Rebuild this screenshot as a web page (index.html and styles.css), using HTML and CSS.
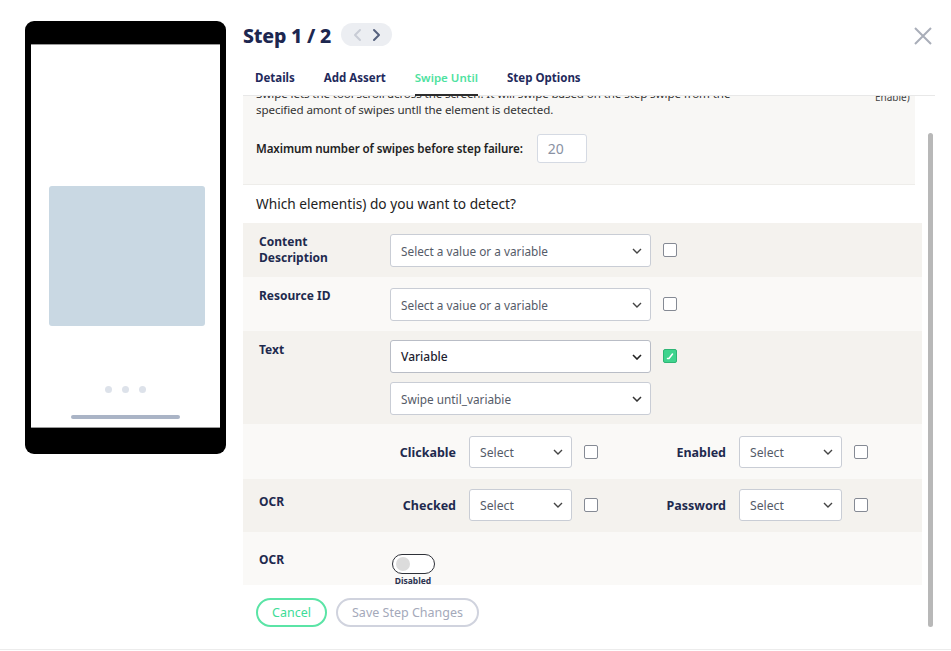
FILE: index.html
```html
<!DOCTYPE html>
<html>
<head>
<meta charset="utf-8">
<link rel="stylesheet" href="styles.css">
</head>
<body>
<div class="modal">
  <div class="phone">
    <div class="screen">
      <div class="shot"></div>
      <div class="dots"><span></span><span></span><span></span></div>
      <div class="homebar"></div>
    </div>
  </div>
  <div class="main">
    <div class="header">
      <div class="title-wrap">
        <h1 class="title">Step 1 / 2</h1>
        <div class="pager">
          <svg width="10" height="14" viewBox="0 0 10 14"><polyline points="7,2 2,7 7,12" fill="none" stroke="#c8ccd5" stroke-width="2" stroke-linecap="round" stroke-linejoin="round"/></svg>
          <svg width="10" height="14" viewBox="0 0 10 14"><polyline points="3,2 8,7 3,12" fill="none" stroke="#56617d" stroke-width="2" stroke-linecap="round" stroke-linejoin="round"/></svg>
        </div>
      </div>
      <svg class="close" width="20" height="20" viewBox="0 0 20 20"><path d="M2 2 L18 18 M18 2 L2 18" stroke="#a9aeb9" stroke-width="2" fill="none"/></svg>
    </div>
    <div class="tabs">
      <span class="tab">Details</span>
      <span class="tab">Add Assert</span>
      <span class="tab active">Swipe Until</span>
      <span class="tab">Step Options</span>
    </div>
    <div class="viewport">
      <div class="content">
        <div class="intro">
          <div class="intro-top">
            <div class="desc">
              <span class="line">Swipe lets the tool scroll across the screen. It will swipe based on the step swipe from the</span>
              <span class="line">specified amont of swipes untll the element is detected.</span>
            </div>
            <div class="side-note">Enable)</div>
          </div>
          <div class="max-row">
            <span class="max-label">Maximum number of swipes before step failure:</span>
            <div class="num-input">20</div>
          </div>
        </div>
        <div class="which">Which elementis) do you want to detect?</div>

        <div class="row dark">
          <div class="label">Content<br>Description</div>
          <div class="controls">
            <div class="select wide"><span>Select a value or a variable</span><svg width="10" height="6" viewBox="0 0 10 6"><polyline points="1,1 5,5 9,1" fill="none" stroke="#444" stroke-width="1.4"/></svg></div>
          </div>
          <div class="check"></div>
        </div>

        <div class="row light">
          <div class="label">Resource ID</div>
          <div class="controls">
            <div class="select wide"><span>Select a vaiue or a variable</span><svg width="10" height="6" viewBox="0 0 10 6"><polyline points="1,1 5,5 9,1" fill="none" stroke="#444" stroke-width="1.4"/></svg></div>
          </div>
          <div class="check"></div>
        </div>

        <div class="row dark text-row">
          <div class="label">Text</div>
          <div class="controls">
            <div class="select wide strong"><span>Variable</span><svg width="10" height="6" viewBox="0 0 10 6"><polyline points="1,1 5,5 9,1" fill="none" stroke="#222" stroke-width="1.6"/></svg></div>
            <div class="select wide"><span>Swipe until_variabie</span><svg width="10" height="6" viewBox="0 0 10 6"><polyline points="1,1 5,5 9,1" fill="none" stroke="#333" stroke-width="1.5"/></svg></div>
          </div>
          <div class="check on"><svg width="14" height="14" viewBox="0 0 14 14"><path d="M4.5 9.5 L6 9.5 L9.5 5" fill="none" stroke="#fff" stroke-width="1.5" stroke-linecap="round"/></svg></div>
        </div>

        <div class="row light pairs">
          <div class="label"></div>
          <div class="pair first">
            <span class="plabel">Clickable</span>
            <div class="select small"><span>Select</span><svg width="10" height="6" viewBox="0 0 10 6"><polyline points="1,1 5,5 9,1" fill="none" stroke="#444" stroke-width="1.4"/></svg></div>
            <div class="check"></div>
          </div>
          <div class="pair second">
            <span class="plabel">Enabled</span>
            <div class="select small"><span>Select</span><svg width="10" height="6" viewBox="0 0 10 6"><polyline points="1,1 5,5 9,1" fill="none" stroke="#444" stroke-width="1.4"/></svg></div>
            <div class="check"></div>
          </div>
        </div>

        <div class="row dark pairs">
          <div class="label ocr1">OCR</div>
          <div class="pair first">
            <span class="plabel">Checked</span>
            <div class="select small"><span>Select</span><svg width="10" height="6" viewBox="0 0 10 6"><polyline points="1,1 5,5 9,1" fill="none" stroke="#444" stroke-width="1.4"/></svg></div>
            <div class="check"></div>
          </div>
          <div class="pair second">
            <span class="plabel">Password</span>
            <div class="select small"><span>Select</span><svg width="10" height="6" viewBox="0 0 10 6"><polyline points="1,1 5,5 9,1" fill="none" stroke="#444" stroke-width="1.4"/></svg></div>
            <div class="check"></div>
          </div>
        </div>

        <div class="row light ocr-row">
          <div class="label">OCR</div>
          <div class="toggle-wrap">
            <div class="toggle"><span class="knob"></span></div>
            <span class="toggle-text">Disabled</span>
          </div>
        </div>

        <div class="buttons">
          <button class="btn cancel">Cancel</button>
          <button class="btn save">Save Step Changes</button>
        </div>
      </div>
      <div class="scrollbar"><div class="thumb"></div></div>
    </div>
  </div>
</div>
</body>
</html>
```

FILE: styles.css
```css
* { box-sizing: border-box; }
html, body { margin: 0; padding: 0; background: #fff; }
body { font-family: "Noto Sans", "Open Sans", sans-serif; color: #222; }

.modal {
  display: flex;
  height: 650px;
  padding: 21px 16px 0 25px;
  border-bottom: 1px solid #ececec;
  gap: 17px;
  align-items: flex-start;
}

/* phone */
.phone {
  width: 201px;
  height: 433px;
  background: #000;
  border-radius: 9px;
  padding: 23px 6px 26px 6px;
  flex: none;
}
.screen {
  background: #fff;
  height: 100%;
  display: flex;
  flex-direction: column;
  align-items: center;
  padding-top: 141px;
  border-top: 1px solid #9a9a9a;
  border-bottom: 1px solid #9a9a9a;
}
.shot {
  width: 156px;
  height: 140px;
  background: #c9d8e3;
  border-radius: 3px;
  margin-left: 2px;
}
.dots { display: flex; gap: 10px; margin-top: 60px; }
.dots span { width: 7px; height: 7px; border-radius: 50%; background: #dde2ea; }
.homebar { width: 109px; height: 4px; border-radius: 2px; background: #aab4c6; margin-top: 22px; }

/* main */
.main { width: 692px; flex: none; margin-top: -21px; }
.header {
  height: 50px;
  padding-top: 20px;
  display: flex;
  justify-content: space-between;
  align-items: center;
}
.title-wrap { display: flex; align-items: center; gap: 10px; height: 30px; }
.title {
  margin: 0;
  font-size: 19.5px;
  font-weight: 800;
  color: #1d2750;
  letter-spacing: -0.2px;
}
.pager {
  width: 51px;
  height: 23px;
  border-radius: 12px;
  background: #eceef2;
  display: flex;
  align-items: center;
  justify-content: center;
  gap: 8px;
  margin-top: -1px;
}
.close { margin-right: 2px; margin-top: 2px; }

.tabs {
  display: flex;
  gap: 29px;
  height: 46px;
  padding: 19px 0 0 12px;
  border-bottom: 1px solid #e8e8e8;
  position: relative;
  z-index: 2;
}
.tab {
  font-size: 11.5px;
  font-weight: 700;
  color: #1f2a5c;
  height: 27px;
  line-height: 18px;
  border-bottom: 2px solid transparent;
}
.tab.active { color: #4ee2a0; font-weight: 600; border-bottom-color: #2c2c2c; }

.viewport {
  display: flex;
  gap: 6px;
  height: 536px;
  overflow: hidden;
}
.content { width: 679px; flex: none; }
.scrollbar { width: 5px; flex: none; }
.thumb { margin-top: 37px; height: 494px; width: 5px; border-radius: 3px; background: #b8b8b8; }

.intro {
  background: #f8f7f5;
  margin-top: -10px;
  padding: 0 0 21px 13px;
  border-bottom: 1px solid #eeedea;
  width: 672px;
}
.intro-top { display: flex; justify-content: space-between; }
.desc { font-size: 11.6px; line-height: 16px; color: #333; letter-spacing: -0.1px; }
.line { display: block; white-space: nowrap; }
.side-note { font-size: 10px; line-height: 12px; color: #444; width: 40px; margin-top: 5px; text-align: left; }
.max-row { display: flex; align-items: center; margin-top: 16px; gap: 14px; }
.max-label { font-size: 11.6px; font-weight: 600; color: #222; letter-spacing: -0.1px; }
.num-input {
  width: 50px;
  height: 29px;
  border: 1px solid #d5dae3;
  border-radius: 3px;
  background: #fff;
  color: #8a92a3;
  font-size: 14px;
  line-height: 27px;
  padding-left: 10px;
}

.which {
  height: 38px;
  padding-left: 13px;
  font-size: 13.7px;
  line-height: 38px;
  color: #222;
  background: #fff;
}

.row { display: flex; align-items: flex-start; padding: 11px 0 10px 16px; }
.row.dark { background: #f4f2ee; }
.row.light { background: #faf9f7; }
.row.text-row { padding-top: 9px; padding-bottom: 9px; }
.text-row .label { margin-top: 2px; }
.label {
  width: 131px;
  flex: none;
  font-size: 12px;
  font-weight: 700;
  line-height: 16px;
  color: #1e2a4e;
}
.controls { display: flex; flex-direction: column; gap: 9px; }
.select {
  display: flex;
  align-items: center;
  justify-content: space-between;
  height: 33px;
  background: #fff;
  border: 1px solid #c9cdd5;
  border-radius: 3px;
  padding: 0 8px 0 10px;
  font-size: 11.8px;
  color: #555b68;
}
.select.wide { width: 261px; }
.select.strong { color: #1e2230; font-weight: 500; font-size: 12px; border-color: #b9bdc6; }
.select.small { width: 103px; height: 32px; padding-left: 10px; font-size: 12.2px; }
.check {
  width: 14px;
  height: 14px;
  border: 1.5px solid #858a94;
  border-radius: 2px;
  margin: 9px 0 0 12px;
  background: #fff;
  flex: none;
}
.check.on { background: #3fd48e; border-color: #2eb575; display: flex; align-items: center; justify-content: center; }
.check.on svg { flex: none; }

.row.pairs { padding-top: 12px; padding-bottom: 11px; height: 55px; }
.row.pairs.dark { padding-top: 10px; height: 53px; }
.pair { display: flex; align-items: center; }
.pair .check { margin-top: 0; }
.plabel { font-size: 12.5px; font-weight: 700; color: #1e2a4e; text-align: right; flex: none; margin-right: 13px; }
.pair.first .plabel { width: 66px; }
.pair.second .plabel { width: 128px; }
.label.ocr1 { margin-top: 5px; }

.ocr-row { padding-top: 20px; height: 53px; }
.toggle-wrap { display: flex; flex-direction: column; align-items: center; width: 44px; margin-top: 2px; margin-left: 1px; }
.toggle {
  width: 43px;
  height: 20px;
  border: 1.5px solid #2e3138;
  border-radius: 10px;
  background: #fff;
  padding: 2px 3px;
}
.knob { display: block; width: 14px; height: 14px; border-radius: 50%; background: #dcdcdc; }
.toggle-text { font-size: 8.5px; font-weight: 700; color: #2b3350; margin-top: 1px; line-height: 11px; }

.buttons { display: flex; gap: 9px; padding: 13px 0 0 13px; }
.btn {
  font-family: "Noto Sans", "Open Sans", sans-serif;
  height: 29px;
  border-radius: 15px;
  background: #fff;
  font-size: 12.5px;
  padding: 0;
}
.btn.cancel { width: 71px; border: 2px solid #5be4a6; color: #3ddc97; }
.btn.save { width: 143px; border: 2px solid #d0d3de; color: #a4a9ba; }
```
